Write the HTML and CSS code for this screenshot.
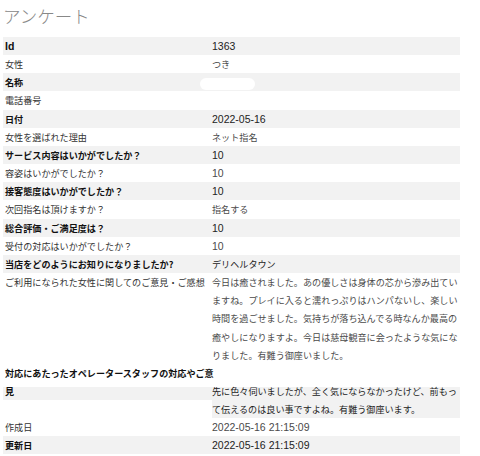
FILE: index.html
```html
<!DOCTYPE html>
<html lang="ja">
<head>
    <meta charset="UTF-8">
    <meta name="viewport" content="width=device-width, initial-scale=1.0">
    <title>アンケート</title>
    <link rel="stylesheet" href="styles.css">
</head>
<body>
    <h1 class="page-title">アンケート</h1>

    <!-- Survey answers -->
    <dl class="survey">
        <div class="survey-row"><dt class="num">Id</dt><dd class="num">1363</dd></div>
        <div class="survey-row"><dt>女性</dt><dd>つき</dd></div>
        <div class="survey-row"><dt>名称</dt><dd><span class="masked"></span></dd></div>
        <div class="survey-row"><dt>電話番号</dt><dd></dd></div>
        <div class="survey-row"><dt>日付</dt><dd class="num">2022-05-16</dd></div>
        <div class="survey-row"><dt>女性を選ばれた理由</dt><dd>ネット指名</dd></div>
        <div class="survey-row"><dt>サービス内容はいかがでしたか？</dt><dd class="num">10</dd></div>
        <div class="survey-row"><dt>容姿はいかがでしたか？</dt><dd class="num">10</dd></div>
        <div class="survey-row"><dt>接客態度はいかがでしたか？</dt><dd class="num">10</dd></div>
        <div class="survey-row"><dt>次回指名は頂けますか？</dt><dd>指名する</dd></div>
        <div class="survey-row"><dt>総合評価・ご満足度は？</dt><dd class="num">10</dd></div>
        <div class="survey-row"><dt>受付の対応はいかがでしたか？</dt><dd class="num">10</dd></div>
        <div class="survey-row"><dt>当店をどのようにお知りになりましたか?</dt><dd>デリヘルタウン</dd></div>
        <div class="survey-row"><dt>ご利用になられた女性に関してのご意見・ご感想</dt><dd>今日は癒されました。あの優しさは身体の芯から滲み出ていますね。プレイに入ると濡れっぷりはハンパないし、楽しい時間を過ごせました。気持ちが落ち込んでる時なんか最高の癒やしになりますよ。今日は慈母観音に会ったような気になりました。有難う御座いました。</dd></div>
        <div class="survey-row is-split"><dt>対応にあたったオペレータースタッフの対応やご意見</dt><dd>先に色々伺いましたが、全く気にならなかったけど、前もって伝えるのは良い事ですよね。有難う御座います。</dd></div>
        <div class="survey-row"><dt>作成日</dt><dd class="num">2022-05-16 21:15:09</dd></div>
        <div class="survey-row"><dt>更新日</dt><dd class="num">2022-05-16 21:15:09</dd></div>
    </dl>
</body>
</html>
```

FILE: styles.css
```css
/* General */
body {
    margin: 0;
    padding: 0 20px 0 3px;
    font-family: "Noto Sans CJK JP", "Liberation Sans", sans-serif;
    font-size: 9.1px;
    color: #333;
    background-color: #fff;
}

.page-title {
    margin: 0;
    height: 37px;
    line-height: 32px;
    font-size: 17.5px;
    font-weight: 300;
    color: #888;
}

/* Survey list */
.survey {
    margin: 0;
}

.survey-row {
    display: grid;
    grid-template-columns: 209px 1fr;
    line-height: 18.15px;
}

.survey-row dt {
    padding-left: 2px;
}

.survey-row dd {
    margin: 0;
    color: #4a4a4a;
}

/* ascii values read better at the larger size */
.survey-row .num {
    font-family: "Liberation Sans", Arial, sans-serif;
    font-size: 10.5px;
}

.survey-row:nth-child(odd) {
    background-color: #f2f2f2;
}

.survey-row:nth-child(odd) dt {
    font-weight: bold;
    color: #111;
}

.survey-row:nth-child(odd) dd {
    color: #222;
}

.survey-row.is-split {
    background-color: transparent;
    align-items: start;
}

.survey-row.is-split dt {
    width: 212px;
    background: linear-gradient(to bottom, transparent 23px, #f2f2f2 23px);
    background-size: 209px 100%;
    background-repeat: no-repeat;
}

.survey-row.is-split dd {
    margin-top: 18px;
    background: linear-gradient(to bottom, transparent 5px, #f2f2f2 5px);
}

.masked {
    display: inline-block;
    width: 55px;
    height: 12px;
    margin-left: -12px;
    vertical-align: middle;
    border-radius: 6px;
    background-color: #fff;
}
```
